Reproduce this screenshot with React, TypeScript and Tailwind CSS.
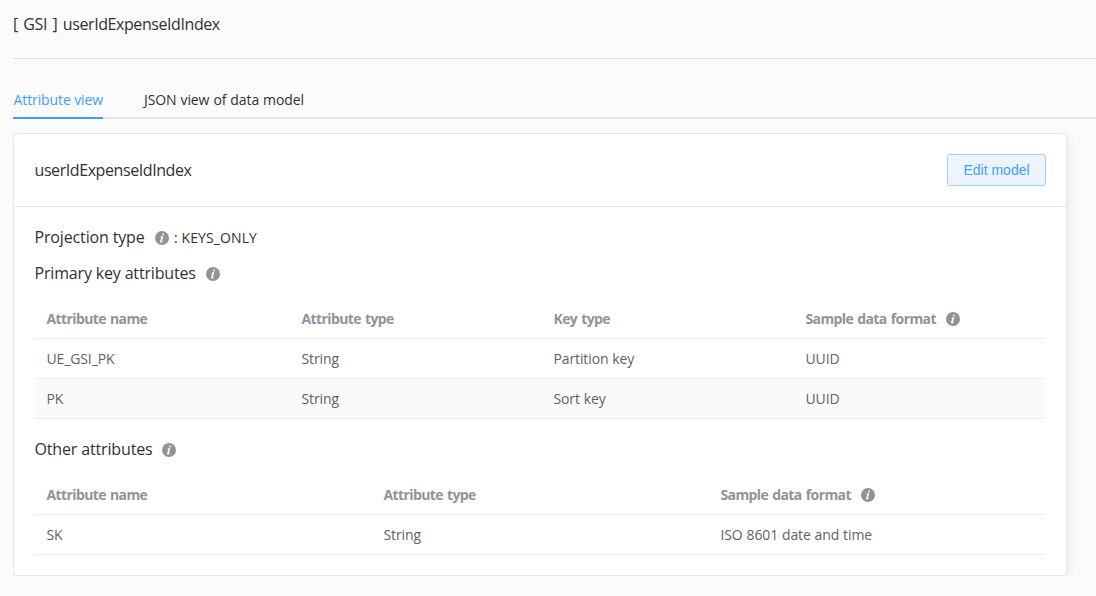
import React from "react";

function InfoIcon({ className = "" }: { className?: string }) {
  return (
    <svg viewBox="0 0 1024 1024" className={`block size-4 shrink-0 fill-[#909399] ${className}`} aria-hidden="true">
      <path d="M512 64a448 448 0 1 1 0 896.064A448 448 0 0 1 512 64zm67.2 275.072c33.28 0 60.288-23.104 60.288-57.344s-27.072-57.344-60.288-57.344c-33.28 0-60.16 23.104-60.16 57.344s26.88 57.344 60.16 57.344zM590.912 699.2c0-6.848 2.368-24.64 1.024-34.752l-52.608 60.544c-10.88 11.456-24.512 19.392-30.912 17.28a12.992 12.992 0 0 1-8.256-14.72l87.68-276.992c7.168-35.136-12.544-67.2-54.336-71.296-44.096 0-108.992 44.736-148.48 101.504 0 6.784-1.28 23.68.064 33.792l52.544-60.608c10.88-11.328 23.552-19.328 29.952-17.152a12.8 12.8 0 0 1 7.808 16.128L388.48 728.576c-10.048 32.256 8.96 63.872 55.04 71.04 67.84 0 107.904-43.648 147.456-100.416z" />
    </svg>
  );
}

type Column = { label: string; width: string; info?: boolean };

function AttributeTable({ columns, rows }: { columns: Column[]; rows: string[][] }) {
  return (
    <div className="w-[1011px] text-[14px]">
      <div className="flex h-10 items-center border-b border-[#ebeef5] font-bold text-[#909399]">
        {columns.map((c) => (
          <div key={c.label} className={`flex items-center pl-[12.5px] ${c.width}`}>
            <span className={`tracking-[-0.6px] [word-spacing:1px] ${c.info ? "w-[131.5px]" : ""}`}>{c.label}</span>
            {c.info && <InfoIcon className="ml-2" />}
          </div>
        ))}
      </div>
      {rows.map((row, i) => (
        <div key={row[0]} className={`flex h-10 items-center border-b border-[#ebeef5] text-[#606266] ${i % 2 ? "bg-[#fafafa]" : ""}`}>
          {row.map((cell, j) => (
            <div key={j} className={`pl-[12.5px] tracking-[-0.12px] [word-spacing:0.4px] ${columns[j].width}`}>{cell}</div>
          ))}
        </div>
      ))}
    </div>
  );
}

export default function App() {
  return (
    <div className="h-[596px] overflow-hidden bg-[#fbfbfb] pl-[13px] font-['Open_Sans',sans-serif] whitespace-nowrap text-[#303133]">
      <header className="flex h-[59px] border-b border-[#dcdfe6] pt-3 text-[16px] leading-6 tracking-[-0.42px] [word-spacing:1.8px]">
        [ GSI ] userIdExpenseIdIndex
      </header>
      <nav className="mt-5 flex h-10 border-b-2 border-[#e4e7ed] text-[14px] leading-[42px]">
        <div className="h-10 w-[90px] border-b-2 border-[#409eff] pl-[0.5px] tracking-[-0.1px] text-[#409eff]">Attribute view</div>
        <div className="ml-[41px] tracking-[-0.1px] [word-spacing:0.5px]">JSON view of data model</div>
      </nav>
      <div className="mt-[14px] h-[443px] overflow-hidden">
        <section className="h-[443px] w-[1054px] rounded border border-[#e4e7ed] bg-white shadow-[0_2px_12px_rgba(0,0,0,0.1)]">
          <div className="flex h-[73px] items-center justify-between border-b border-[#e4e7ed] pr-5 pl-[20.5px]">
            <h2 className="text-[16px] tracking-[-0.42px]">userIdExpenseIdIndex</h2>
            <button className="h-8 w-[99px] rounded-[3px] border border-[#a0cfff] bg-[#ecf5ff] font-['Liberation_Sans',sans-serif] text-[14px] text-[#409eff]">
              Edit model
            </button>
          </div>
          <div className="pt-3 pl-5">
            <div className="flex h-9 items-center">
              <span className="w-[112px] pl-[0.5px] text-[16px] tracking-[-0.15px]">Projection type</span>
              <InfoIcon className="mt-0.5 ml-2" />
              <span className="ml-1 text-[14px] tracking-[0.1px]">: KEYS_ONLY</span>
            </div>
            <div className="flex h-9 items-center text-[16px] tracking-[-0.17px]">
              <span className="w-[163px] pl-[0.5px]">Primary key attributes</span>
              <InfoIcon className="mt-0.5 ml-2" />
            </div>
            <div className="mt-2">
              <AttributeTable
                columns={[
                  { label: "Attribute name", width: "w-[255px]" },
                  { label: "Attribute type", width: "w-[252px]" },
                  { label: "Key type", width: "w-[252px]" },
                  { label: "Sample data format", width: "w-[252px]", info: true },
                ]}
                rows={[
                  ["UE_GSI_PK", "String", "Partition key", "UUID"],
                  ["PK", "String", "Sort key", "UUID"],
                ]}
              />
            </div>
            <div className="mt-3 flex h-9 items-center text-[16px] tracking-[-0.15px]">
              <span className="w-[119px] pl-[0.5px]">Other attributes</span>
              <InfoIcon className="mt-0.5 ml-2" />
            </div>
            <div className="mt-2">
              <AttributeTable
                columns={[
                  { label: "Attribute name", width: "w-[337px]" },
                  { label: "Attribute type", width: "w-[337px]" },
                  { label: "Sample data format", width: "w-[337px]", info: true },
                ]}
                rows={[["SK", "String", "ISO 8601 date and time"]]}
              />
            </div>
          </div>
        </section>
      </div>
    </div>
  );
}
